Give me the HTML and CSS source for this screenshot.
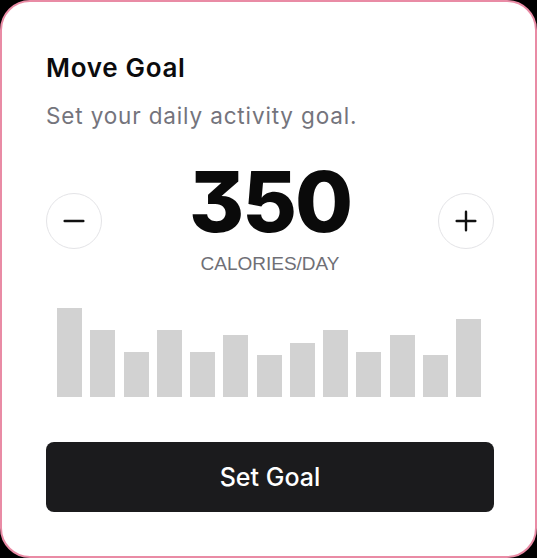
FILE: index.html
```html
<!DOCTYPE html>
<html lang="en">
<head>
<meta charset="utf-8">
<title>Move Goal</title>
<link rel="stylesheet" href="styles.css">
</head>
<body>
<div class="card">
  <h2 class="title">Move Goal</h2>
  <p class="desc">Set your daily activity goal.</p>
  <div class="stepper">
    <button class="round" aria-label="Decrease">
      <svg width="32" height="32" viewBox="0 0 24 24" fill="none" stroke="#111" stroke-width="1.8" stroke-linecap="round"><path d="M5 12h14"/></svg>
    </button>
    <div class="value">
      <div class="num">350</div>
      <div class="unit">Calories/day</div>
    </div>
    <button class="round" aria-label="Increase">
      <svg width="32" height="32" viewBox="0 0 24 24" fill="none" stroke="#111" stroke-width="1.8" stroke-linecap="round"><path d="M5 12h14M12 5v14"/></svg>
    </button>
  </div>
  <div class="chart">
    <div class="bar" style="height:89px"></div>
    <div class="bar" style="height:67px"></div>
    <div class="bar" style="height:45px"></div>
    <div class="bar" style="height:67px"></div>
    <div class="bar" style="height:45px"></div>
    <div class="bar" style="height:62px"></div>
    <div class="bar" style="height:42px"></div>
    <div class="bar" style="height:54px"></div>
    <div class="bar" style="height:67px"></div>
    <div class="bar" style="height:45px"></div>
    <div class="bar" style="height:62px"></div>
    <div class="bar" style="height:42px"></div>
    <div class="bar" style="height:78px"></div>
  </div>
  <button class="submit">Set Goal</button>
</div>
</body>
</html>
```
FILE: styles.css
```css
html, body {
  margin: 0;
  padding: 0;
  background: #000;
}
body {
  width: 537px;
  height: 558px;
  font-family: Inter, "Liberation Sans", sans-serif;
}
.card {
  box-sizing: border-box;
  width: 537px;
  height: 558px;
  background: #fff;
  border: 2px solid #e98ba5;
  border-radius: 30px;
  padding: 50px 41px 0 44px;
  display: flex;
  flex-direction: column;
}
.title {
  margin: 0;
  font-size: 26px;
  line-height: 32px;
  font-weight: 600;
  color: #0b0b0d;
  letter-spacing: 0.7px;
}
.desc {
  margin: 18px 0 0;
  font-size: 22.5px;
  line-height: 28px;
  color: #74747c;
  letter-spacing: 0.85px;
}
.stepper {
  margin-top: 30px;
  display: flex;
  align-items: flex-start;
  justify-content: space-between;
}
.round {
  margin-top: 33px;
  width: 56px;
  height: 56px;
  border-radius: 50%;
  border: 1px solid #e4e4e7;
  background: #fff;
  display: flex;
  align-items: center;
  justify-content: center;
  padding: 0;
}
.value {
  display: flex;
  flex-direction: column;
  align-items: center;
}
.num {
  font-family: Inter, "Liberation Sans", sans-serif;
  font-weight: 800;
  font-size: 84px;
  line-height: 84px;
  letter-spacing: -2px;
  font-feature-settings: "cv09" 1;
  color: #0a0a0a;
}
.unit {
  margin-top: 9px;
  font-family: "Liberation Sans", Arial, sans-serif;
  font-size: 19px;
  line-height: 22px;
  text-transform: uppercase;
  color: #6f6f76;
}
.chart {
  margin-top: 32px;
  height: 90px;
  padding: 0 13px 0 11px;
  display: flex;
  align-items: flex-end;
  justify-content: space-between;
}
.bar {
  width: 25px;
  background: #d2d2d2;
}
.submit {
  margin-top: 45px;
  height: 70px;
  border: 0;
  border-radius: 8px;
  background: #1b1b1d;
  color: #fff;
  font-family: Inter, "Liberation Sans", sans-serif;
  font-size: 25px;
  font-weight: 500;
}
```
